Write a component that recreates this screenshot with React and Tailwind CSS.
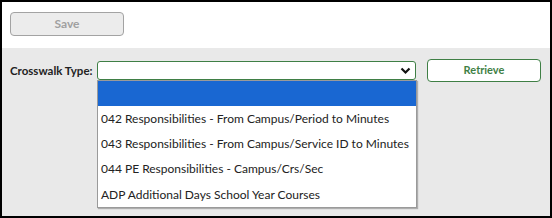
const options = [
  "",
  "042 Responsibilities - From Campus/Period to Minutes",
  "043 Responsibilities - From Campus/Service ID to Minutes",
  "044 PE Responsibilities - Campus/Crs/Sec",
  "ADP Additional Days School Year Courses",
];

const App = () => {
  return (
    <div
      className="w-[552px] h-[218px] border-2 border-black bg-white flex flex-col overflow-hidden"
      style={{ fontFamily: "Lato, 'Open Sans', sans-serif" }}
    >
      {/* top toolbar */}
      <div className="h-[46px] pl-2 pt-2">
        <button className="w-[114px] h-[24px] rounded-[4px] border border-[#a3a3a3] bg-[#ececec] text-[12px] font-bold text-[#a0a0a0]">
          Save
        </button>
      </div>

      {/* search row */}
      <div className="flex-1 bg-[#e9e9e9] pl-2 pt-[11px]">
        <div className="flex items-center h-[23px]">
          <span className="w-[87px] shrink-0 whitespace-nowrap text-[11.5px] font-bold text-[#222]">Crosswalk Type:</span>

          <div className="relative shrink-0">
            <div className="w-[319px] h-[19px] bg-white border border-[#3f7f45] rounded-[3px] flex items-center justify-end pr-[4px]">
              <svg width="11" height="8" viewBox="0 0 11 8">
                <path d="M1.5 1.5 L5.5 5.5 L9.5 1.5" fill="none" stroke="#111" strokeWidth="2.2" />
              </svg>
            </div>

            {/* open dropdown */}
            <div className="absolute left-0 top-[19px] w-[320px] bg-white border border-[#9a9a9a] shadow-[1px_1px_1px_rgba(0,0,0,0.25)]">
              {options.map((o, i) => (
                <div
                  key={i}
                  className={
                    i === 0
                      ? "h-[25px] bg-[#1967d2] text-white text-[12px] pl-[3px] flex items-center whitespace-nowrap"
                      : "h-[25.3px] text-[#222] text-[12px] pl-[3px] flex items-center whitespace-nowrap"
                  }
                >
                  {o}
                </div>
              ))}
            </div>
          </div>

          <button className="ml-[11px] shrink-0 w-[114px] h-[23px] rounded-[4px] border border-[#3f7f45] bg-white text-[11px] font-bold text-[#3f7f45]">
            Retrieve
          </button>
        </div>
      </div>
    </div>
  );
};

export default App;
